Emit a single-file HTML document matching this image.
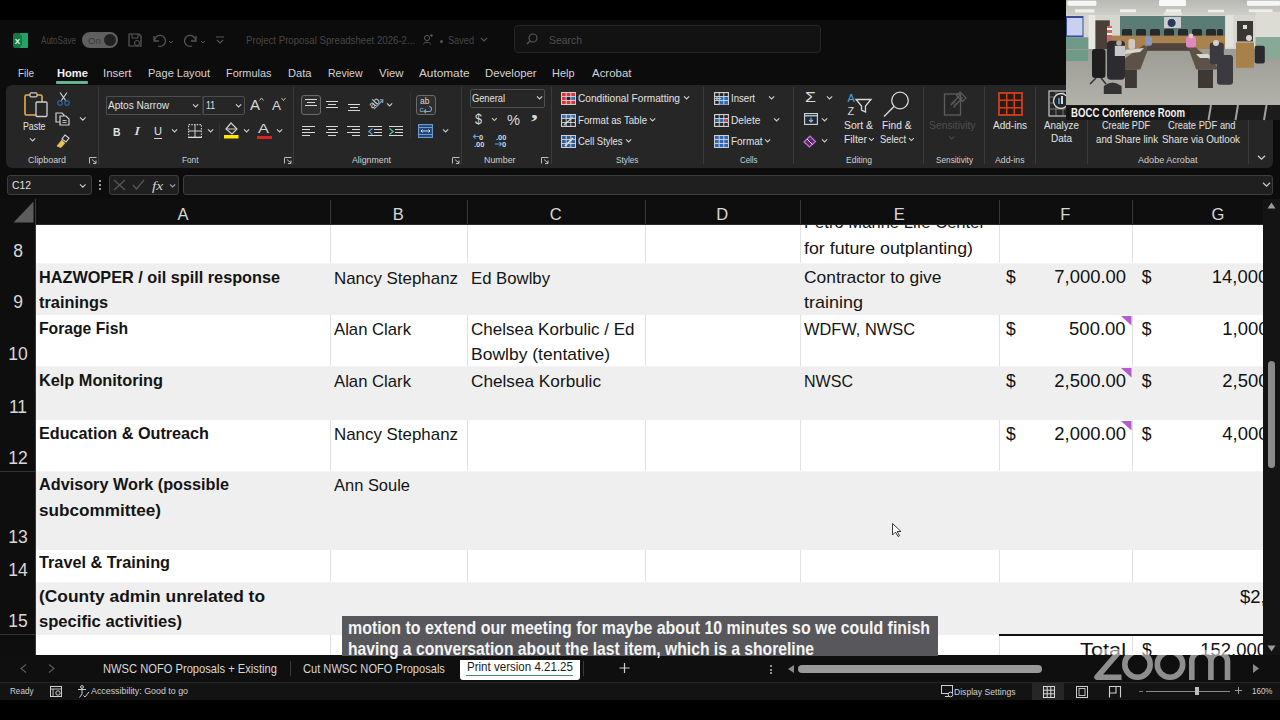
<!DOCTYPE html>
<html><head><meta charset="utf-8">
<style>
html,body{margin:0;padding:0;width:1280px;height:720px;overflow:hidden;background:#000;}
body{position:relative;font-family:"Liberation Sans", sans-serif;}
.t{position:absolute;white-space:nowrap;line-height:1;}
.r{position:absolute;}
svg.r{overflow:visible;}
</style></head><body>
<div class="r" style="left:0px;top:0px;width:1280px;height:20px;background:#000;"></div><div class="r" style="left:0px;top:20px;width:1280px;height:179px;background:#0c0c0c;"></div><div class="r" style="left:6px;top:85px;width:1267px;height:83px;background:#262626;border-radius:6px;"></div><svg class="r" style="left:13px;top:33px;" width="15" height="15" viewBox="0 0 15 15"><rect x="0" y="0" width="15" height="15" rx="2" fill="#1e7145"/><rect x="7" y="0" width="8" height="15" rx="1" fill="#21a366"/><rect x="0" y="2" width="9" height="11" rx="1" fill="#107c41"/><text x="4.5" y="11" font-size="8" font-family="Liberation Sans" font-weight="bold" fill="#e8f5ee" text-anchor="middle">X</text></svg><div class="t" style="left:41px;top:35.53px;font-size:10px;color:#474747;font-weight:normal;transform:scaleX(0.8071);transform-origin:left top;">AutoSave</div><div class="r" style="left:82px;top:32px;width:36px;height:16px;background:#5f5f5f;border-radius:8px;"></div><div class="t" style="left:88px;top:35.96px;font-size:9.5px;color:#3a3a3a;font-weight:normal;">On</div><div class="r" style="left:104px;top:34px;width:12px;height:12px;background:#202020;border-radius:6px;"></div><svg class="r" style="left:128px;top:33px;" width="14" height="14" viewBox="0 0 14 14"><path d="M1 1h10l2 2v10H1z" fill="none" stroke="#5a5a5a" stroke-width="1.2"/><path d="M4 1v4h6V1" fill="none" stroke="#5a5a5a" stroke-width="1"/><circle cx="9" cy="10" r="2.5" fill="none" stroke="#5a5a5a" stroke-width="1"/></svg><svg class="r" style="left:152px;top:33px;" width="22" height="14" viewBox="0 0 22 14"><path d="M2 3v5h5" fill="none" stroke="#555" stroke-width="1.3"/><path d="M2.5 7.5A5.5 5.5 0 1 1 6 13" fill="none" stroke="#555" stroke-width="1.3"/><path d="M17 8l2 2 2-2" fill="none" stroke="#555" stroke-width="1"/></svg><svg class="r" style="left:184px;top:33px;" width="22" height="14" viewBox="0 0 22 14"><path d="M12 3v5H7" fill="none" stroke="#555" stroke-width="1.3"/><path d="M11.5 7.5A5.5 5.5 0 1 0 8 13" fill="none" stroke="#555" stroke-width="1.3"/><path d="M17 8l2 2 2-2" fill="none" stroke="#555" stroke-width="1"/></svg><svg class="r" style="left:215px;top:35px;" width="10" height="10" viewBox="0 0 10 10"><path d="M1 2h8M2 5l3 3 3-3" fill="none" stroke="#555" stroke-width="1.1"/></svg><div class="t" style="left:246px;top:35.11px;font-size:10.5px;color:#474747;font-weight:normal;transform:scaleX(0.9192);transform-origin:left top;">Project Proposal Spreadsheet 2026-2...</div><svg class="r" style="left:423px;top:34px;" width="10" height="11" viewBox="0 0 10 11"><circle cx="4" cy="4" r="2.6" fill="none" stroke="#5a5a5a" stroke-width="1"/><path d="M0.5 10.5c0-3 7-3 7 0" fill="none" stroke="#5a5a5a" stroke-width="1"/><circle cx="8.5" cy="1.5" r="1.2" fill="#5a5a5a"/></svg><div class="r" style="left:440px;top:40px;width:3px;height:3px;background:#555;border-radius:2px;"></div><div class="t" style="left:448px;top:35.11px;font-size:10.5px;color:#474747;font-weight:normal;transform:scaleX(0.8733);transform-origin:left top;">Saved</div><svg class="r" style="left:480px;top:37px;" width="8" height="6" viewBox="0 0 8 6"><path d="M1 1l3 3 3-3" fill="none" stroke="#555" stroke-width="1.1"/></svg><div class="r" style="left:514px;top:25px;width:307px;height:28px;background:#121212;border:1px solid #262626;border-radius:4px;box-sizing:border-box;"></div><svg class="r" style="left:526px;top:33px;" width="12" height="12" viewBox="0 0 12 12"><circle cx="7" cy="5" r="4" fill="none" stroke="#555" stroke-width="1.2"/><path d="M4 8l-3 3" stroke="#555" stroke-width="1.4"/></svg><div class="t" style="left:549px;top:35.11px;font-size:10.5px;color:#505050;font-weight:normal;transform:scaleX(0.9919);transform-origin:left top;">Search</div><div class="t" style="left:18px;top:67.51px;font-size:11.8px;color:#d4d4d4;font-weight:normal;transform:scaleX(0.8415);transform-origin:left top;">File</div><div class="t" style="left:102.5px;top:67.51px;font-size:11.8px;color:#d4d4d4;font-weight:normal;transform:scaleX(0.9657);transform-origin:left top;">Insert</div><div class="t" style="left:147.5px;top:67.51px;font-size:11.8px;color:#d4d4d4;font-weight:normal;transform:scaleX(0.9356);transform-origin:left top;">Page Layout</div><div class="t" style="left:225.5px;top:67.51px;font-size:11.8px;color:#d4d4d4;font-weight:normal;transform:scaleX(0.9252);transform-origin:left top;">Formulas</div><div class="t" style="left:287.5px;top:67.51px;font-size:11.8px;color:#d4d4d4;font-weight:normal;transform:scaleX(0.9428);transform-origin:left top;">Data</div><div class="t" style="left:327.5px;top:67.51px;font-size:11.8px;color:#d4d4d4;font-weight:normal;transform:scaleX(0.8917);transform-origin:left top;">Review</div><div class="t" style="left:378.5px;top:67.51px;font-size:11.8px;color:#d4d4d4;font-weight:normal;transform:scaleX(0.9659);transform-origin:left top;">View</div><div class="t" style="left:418.5px;top:67.51px;font-size:11.8px;color:#d4d4d4;font-weight:normal;transform:scaleX(0.9998);transform-origin:left top;">Automate</div><div class="t" style="left:485px;top:67.51px;font-size:11.8px;color:#d4d4d4;font-weight:normal;transform:scaleX(0.9575);transform-origin:left top;">Developer</div><div class="t" style="left:552px;top:67.51px;font-size:11.8px;color:#d4d4d4;font-weight:normal;transform:scaleX(0.9271);transform-origin:left top;">Help</div><div class="t" style="left:591.5px;top:67.51px;font-size:11.8px;color:#d4d4d4;font-weight:normal;transform:scaleX(0.9713);transform-origin:left top;">Acrobat</div><div class="t" style="left:56.5px;top:67.51px;font-size:11.8px;color:#f2f2f2;font-weight:bold;transform:scaleX(0.9455);transform-origin:left top;">Home</div><div class="r" style="left:56px;top:81px;width:32px;height:2.5px;background:#64b391;border-radius:1px;"></div><svg class="r" style="left:24px;top:92px;" width="24" height="26" viewBox="0 0 24 26"><rect x="1" y="3" width="17" height="20" rx="1.5" fill="none" stroke="#e6ae48" stroke-width="1.6"/><rect x="6" y="0.8" width="7" height="4" rx="1" fill="#262626" stroke="#c9c9c9" stroke-width="1.2"/><rect x="12" y="10" width="11" height="14.5" rx="1" fill="#262626" stroke="#cfcfcf" stroke-width="1.3"/></svg><div class="t" style="left:22.5px;top:120.69px;font-size:11px;color:#e3e3e3;font-weight:normal;transform:scaleX(0.7999);transform-origin:left top;">Paste</div><svg class="r" style="left:29.4px;top:137.4px;" width="7.2" height="5.2" viewBox="0 0 7.2 5.2"><path d="M1 1.3 L3.6 3.9000000000000004 L6.2 1.3" fill="none" stroke="#cfcfcf" stroke-width="1.1"/></svg><svg class="r" style="left:57px;top:92px;" width="13" height="14" viewBox="0 0 13 14"><path d="M3 0.5L9 9M10 0.5L4 9" stroke="#d0d0d0" stroke-width="1.2" fill="none"/><circle cx="3" cy="11" r="2.2" fill="none" stroke="#2d5f96" stroke-width="1.4"/><circle cx="10" cy="11" r="2.2" fill="none" stroke="#2d5f96" stroke-width="1.4"/></svg><svg class="r" style="left:55px;top:112px;" width="15" height="14" viewBox="0 0 15 14"><path d="M1 1h6l2 2v7H1z" fill="none" stroke="#d0d0d0" stroke-width="1.2"/><path d="M5 4h6l3 3v6H5z" fill="#262626" stroke="#d0d0d0" stroke-width="1.2"/><path d="M7.5 8.5h4M7.5 10.5h4" stroke="#d0d0d0" stroke-width="0.9"/></svg><svg class="r" style="left:79.2px;top:116.2px;" width="7.6" height="5.6" viewBox="0 0 7.6 5.6"><path d="M1 1.4 L3.8 4.199999999999999 L6.6 1.4" fill="none" stroke="#cfcfcf" stroke-width="1.1"/></svg><svg class="r" style="left:56px;top:134px;" width="14" height="14" viewBox="0 0 14 14"><path d="M9 1l4 3-3 4-4-3z" fill="none" stroke="#d0d0d0" stroke-width="1.2"/><path d="M6 6L1 12l4 1.5 4-4.5" fill="#e6c460" stroke="#e6ae48" stroke-width="1"/></svg><div class="t" style="left:28px;top:155.68px;font-size:9px;color:#d0d0d0;font-weight:normal;transform:scaleX(0.9864);transform-origin:left top;">Clipboard</div><svg class="r" style="left:88.5px;top:156.5px;" width="8" height="7" viewBox="0 0 8 7"><path d="M0.5 6.5V0.5H7.5" fill="none" stroke="#bbb" stroke-width="1"/><path d="M3 2.5L7 6M7 3.5V6.5H4" fill="none" stroke="#bbb" stroke-width="1"/></svg><div class="r" style="left:98px;top:87px;width:1px;height:77px;background:#3b3b3b;"></div><div class="r" style="left:106px;top:95.5px;width:95px;height:19px;background:transparent;border:1px solid #4e4e4e;border-right:none;box-sizing:border-box;border-radius:2px 0 0 2px;"></div><div class="r" style="left:203px;top:95.5px;width:42px;height:19px;background:transparent;border:1px solid #4e4e4e;box-sizing:border-box;border-radius:0 2px 2px 0;"></div><div class="r" style="left:202px;top:95.5px;width:1px;height:19px;background:#3a3a3a;"></div><div class="t" style="left:108px;top:100.41px;font-size:10.5px;color:#e3e3e3;font-weight:normal;transform:scaleX(0.9590);transform-origin:left top;">Aptos Narrow</div><svg class="r" style="left:192.4px;top:103.4px;" width="7.2" height="5.2" viewBox="0 0 7.2 5.2"><path d="M1 1.3 L3.6 3.9000000000000004 L6.2 1.3" fill="none" stroke="#cfcfcf" stroke-width="1.1"/></svg><div class="t" style="left:206px;top:100.41px;font-size:10.5px;color:#e3e3e3;font-weight:normal;transform:scaleX(0.8257);transform-origin:left top;">11</div><svg class="r" style="left:235.4px;top:103.4px;" width="7.2" height="5.2" viewBox="0 0 7.2 5.2"><path d="M1 1.3 L3.6 3.9000000000000004 L6.2 1.3" fill="none" stroke="#cfcfcf" stroke-width="1.1"/></svg><div class="t" style="left:250px;top:98.15px;font-size:14px;color:#d8d8d8;font-weight:normal;transform:scaleX(1.0708);transform-origin:left top;">A</div><svg class="r" style="left:259px;top:97px;" width="5" height="4" viewBox="0 0 5 4"><path d="M0.5 3.5L2.5 1L4.5 3.5" fill="none" stroke="#ccc" stroke-width="0.9"/></svg><div class="t" style="left:272px;top:99.84px;font-size:12px;color:#d8d8d8;font-weight:normal;transform:scaleX(1.1244);transform-origin:left top;">A</div><svg class="r" style="left:281px;top:97px;" width="5" height="4" viewBox="0 0 5 4"><path d="M0.5 1L2.5 3.5L4.5 1" fill="none" stroke="#ccc" stroke-width="0.9"/></svg><div class="t" style="left:112.5px;top:126.69px;font-size:11px;color:#e3e3e3;font-weight:bold;transform:scaleX(0.9441);transform-origin:left top;">B</div><div class="t" style="left:134px;top:126.27px;font-size:11.5px;color:#e3e3e3;font-weight:normal;font-family:'Liberation Serif';transform:scaleX(1.5662);transform-origin:left top;font-style:italic;">I</div><div class="t" style="left:154px;top:126.19px;font-size:11px;color:#e3e3e3;font-weight:normal;transform:scaleX(1.0070);transform-origin:left top;">U</div><div class="r" style="left:154px;top:137.5px;width:8px;height:1px;background:#d0d0d0;"></div><svg class="r" style="left:170.9px;top:128.4px;" width="7.2" height="5.2" viewBox="0 0 7.2 5.2"><path d="M1 1.3 L3.6 3.9000000000000004 L6.2 1.3" fill="none" stroke="#cfcfcf" stroke-width="1.1"/></svg><svg class="r" style="left:188px;top:124px;" width="14" height="14" viewBox="0 0 14 14"><rect x="0.6" y="0.6" width="12.8" height="12.8" fill="none" stroke="#d0d0d0" stroke-width="1.1" stroke-dasharray="1.5 1.2"/><path d="M7 0.6V13.4M0.6 7H13.4" stroke="#d0d0d0" stroke-width="1"/><path d="M0.6 13.4H13.4" stroke="#e0e0e0" stroke-width="1.2"/></svg><svg class="r" style="left:206.9px;top:128.4px;" width="7.2" height="5.2" viewBox="0 0 7.2 5.2"><path d="M1 1.3 L3.6 3.9000000000000004 L6.2 1.3" fill="none" stroke="#cfcfcf" stroke-width="1.1"/></svg><div class="r" style="left:219px;top:123px;width:1px;height:18px;background:#333;"></div><svg class="r" style="left:224px;top:122px;" width="15" height="17" viewBox="0 0 15 17"><path d="M7 1L13 7L8 12L2 7z" fill="none" stroke="#d0d0d0" stroke-width="1.2"/><path d="M2 7h11" stroke="#d0d0d0" stroke-width="1"/><rect x="0" y="13" width="14.5" height="3.5" fill="#ffe800"/></svg><svg class="r" style="left:242.9px;top:128.4px;" width="7.2" height="5.2" viewBox="0 0 7.2 5.2"><path d="M1 1.3 L3.6 3.9000000000000004 L6.2 1.3" fill="none" stroke="#cfcfcf" stroke-width="1.1"/></svg><div class="t" style="left:258px;top:123.42px;font-size:12.5px;color:#d8d8d8;font-weight:normal;transform:scaleX(1.3193);transform-origin:left top;">A</div><div class="r" style="left:256.5px;top:135.5px;width:15.5px;height:3px;background:#e01f1f;"></div><svg class="r" style="left:276.4px;top:128.4px;" width="7.2" height="5.2" viewBox="0 0 7.2 5.2"><path d="M1 1.3 L3.6 3.9000000000000004 L6.2 1.3" fill="none" stroke="#cfcfcf" stroke-width="1.1"/></svg><div class="t" style="left:181.5px;top:156.18px;font-size:9px;color:#d0d0d0;font-weight:normal;transform:scaleX(0.9162);transform-origin:left top;">Font</div><svg class="r" style="left:284px;top:156.5px;" width="8" height="7" viewBox="0 0 8 7"><path d="M0.5 6.5V0.5H7.5" fill="none" stroke="#bbb" stroke-width="1"/><path d="M3 2.5L7 6M7 3.5V6.5H4" fill="none" stroke="#bbb" stroke-width="1"/></svg><div class="r" style="left:293px;top:87px;width:1px;height:77px;background:#3b3b3b;"></div><div class="r" style="left:301px;top:94.5px;width:20px;height:20.5px;background:#2e2e2e;border:1px solid #6a6a6a;border-radius:3px;box-sizing:border-box;"></div><div class="r" style="left:305px;top:98.5px;width:12px;height:1.3px;background:#d8d8d8;"></div><div class="r" style="left:307px;top:101.5px;width:8px;height:1.3px;background:#d8d8d8;"></div><div class="r" style="left:305px;top:104.5px;width:12px;height:1.3px;background:#d8d8d8;"></div><div class="r" style="left:326px;top:100.5px;width:12px;height:1.3px;background:#d8d8d8;"></div><div class="r" style="left:328px;top:103.5px;width:8px;height:1.3px;background:#d8d8d8;"></div><div class="r" style="left:326px;top:106.5px;width:12px;height:1.3px;background:#d8d8d8;"></div><div class="r" style="left:347.5px;top:104px;width:12px;height:1.3px;background:#d8d8d8;"></div><div class="r" style="left:349.5px;top:107px;width:8px;height:1.3px;background:#d8d8d8;"></div><div class="r" style="left:347.5px;top:110px;width:12px;height:1.3px;background:#d8d8d8;"></div><svg class="r" style="left:368px;top:94px;" width="16" height="17" viewBox="0 0 16 17"><text x="0" y="12" font-size="10" font-family="Liberation Sans" fill="#d8d8d8" transform="rotate(-45 6 8)">ab</text><path d="M6 15L15 6M12 5.5L15 6L14.5 9" fill="none" stroke="#7aa6d0" stroke-width="1.1"/></svg><svg class="r" style="left:385.9px;top:101.9px;" width="7.2" height="5.2" viewBox="0 0 7.2 5.2"><path d="M1 1.3 L3.6 3.9000000000000004 L6.2 1.3" fill="none" stroke="#cfcfcf" stroke-width="1.1"/></svg><div class="r" style="left:302px;top:126px;width:13px;height:1.3px;background:#d8d8d8;"></div><div class="r" style="left:302px;top:129px;width:8px;height:1.3px;background:#d8d8d8;"></div><div class="r" style="left:302px;top:132px;width:13px;height:1.3px;background:#d8d8d8;"></div><div class="r" style="left:302px;top:135px;width:8px;height:1.3px;background:#d8d8d8;"></div><div class="r" style="left:326px;top:126px;width:12px;height:1.3px;background:#d8d8d8;"></div><div class="r" style="left:328px;top:129px;width:8px;height:1.3px;background:#d8d8d8;"></div><div class="r" style="left:326px;top:132px;width:12px;height:1.3px;background:#d8d8d8;"></div><div class="r" style="left:328px;top:135px;width:8px;height:1.3px;background:#d8d8d8;"></div><div class="r" style="left:347px;top:126px;width:13px;height:1.3px;background:#d8d8d8;"></div><div class="r" style="left:352px;top:129px;width:8px;height:1.3px;background:#d8d8d8;"></div><div class="r" style="left:347px;top:132px;width:13px;height:1.3px;background:#d8d8d8;"></div><div class="r" style="left:352px;top:135px;width:8px;height:1.3px;background:#d8d8d8;"></div><div class="r" style="left:368px;top:126px;width:14px;height:1.3px;background:#d8d8d8;"></div><div class="r" style="left:374px;top:129px;width:8px;height:1.3px;background:#d8d8d8;"></div><div class="r" style="left:374px;top:132px;width:8px;height:1.3px;background:#d8d8d8;"></div><div class="r" style="left:368px;top:135px;width:14px;height:1.3px;background:#d8d8d8;"></div><svg class="r" style="left:368px;top:128px;" width="5" height="7" viewBox="0 0 5 7"><path d="M4.5 0.5L0.8 3.5L4.5 6.5" fill="none" stroke="#5aa0e0" stroke-width="1.2"/></svg><div class="r" style="left:389px;top:126px;width:14px;height:1.3px;background:#d8d8d8;"></div><div class="r" style="left:395px;top:129px;width:8px;height:1.3px;background:#d8d8d8;"></div><div class="r" style="left:395px;top:132px;width:8px;height:1.3px;background:#d8d8d8;"></div><div class="r" style="left:389px;top:135px;width:14px;height:1.3px;background:#d8d8d8;"></div><svg class="r" style="left:389px;top:128px;" width="5" height="7" viewBox="0 0 5 7"><path d="M0.5 0.5L4.2 3.5L0.5 6.5" fill="none" stroke="#5ac0a0" stroke-width="1.2"/></svg><div class="r" style="left:410px;top:93px;width:1px;height:45px;background:#333;"></div><div class="r" style="left:416px;top:94.5px;width:20px;height:20.5px;background:#2e2e2e;border:1px solid #6a6a6a;border-radius:3px;box-sizing:border-box;"></div><svg class="r" style="left:419px;top:96px;" width="15" height="17" viewBox="0 0 15 17"><text x="1" y="8" font-size="8.5" font-family="Liberation Sans" fill="#d8d8d8">ab</text><path d="M10 10.5A2.5 2.5 0 0 1 10 15.5H5M7 13.5L5 15.5L7 17" fill="none" stroke="#7aa6d0" stroke-width="1.1"/><text x="0.5" y="16" font-size="8" font-family="Liberation Sans" fill="#8fb5d8">c</text></svg><svg class="r" style="left:418px;top:124px;" width="15" height="14" viewBox="0 0 15 14"><rect x="0.6" y="0.6" width="13.8" height="12.8" fill="#1f4670" stroke="#6f9ed4" stroke-width="1.1"/><path d="M0.6 3.5H14.4M0.6 10.5H14.4" stroke="#6f9ed4" stroke-width="1"/><path d="M3 7h9M4.5 5.5L3 7l1.5 1.5M10.5 5.5L12 7l-1.5 1.5" fill="none" stroke="#dfeaf8" stroke-width="0.9"/></svg><svg class="r" style="left:441.9px;top:128.4px;" width="7.2" height="5.2" viewBox="0 0 7.2 5.2"><path d="M1 1.3 L3.6 3.9000000000000004 L6.2 1.3" fill="none" stroke="#cfcfcf" stroke-width="1.1"/></svg><div class="t" style="left:352px;top:156.18px;font-size:9px;color:#d0d0d0;font-weight:normal;transform:scaleX(0.9745);transform-origin:left top;">Alignment</div><svg class="r" style="left:452px;top:156.5px;" width="8" height="7" viewBox="0 0 8 7"><path d="M0.5 6.5V0.5H7.5" fill="none" stroke="#bbb" stroke-width="1"/><path d="M3 2.5L7 6M7 3.5V6.5H4" fill="none" stroke="#bbb" stroke-width="1"/></svg><div class="r" style="left:461px;top:87px;width:1px;height:77px;background:#3b3b3b;"></div><div class="r" style="left:470px;top:88.5px;width:75px;height:19.5px;background:transparent;border:1px solid #4e4e4e;box-sizing:border-box;border-radius:2px;"></div><div class="t" style="left:472px;top:92.81px;font-size:10.5px;color:#e3e3e3;font-weight:normal;transform:scaleX(0.8834);transform-origin:left top;">General</div><svg class="r" style="left:535.9px;top:95.4px;" width="7.2" height="5.2" viewBox="0 0 7.2 5.2"><path d="M1 1.3 L3.6 3.9000000000000004 L6.2 1.3" fill="none" stroke="#cfcfcf" stroke-width="1.1"/></svg><div class="t" style="left:475px;top:112.45px;font-size:14px;color:#d8d8d8;font-weight:normal;transform:scaleX(0.8989);transform-origin:left top;">$</div><svg class="r" style="left:491.1px;top:116.6px;" width="6.8" height="4.8" viewBox="0 0 6.8 4.8"><path d="M1 1.2 L3.4 3.5999999999999996 L5.8 1.2" fill="none" stroke="#cfcfcf" stroke-width="1.1"/></svg><div class="t" style="left:507px;top:113.15px;font-size:14px;color:#d8d8d8;font-weight:normal;transform:scaleX(1.0443);transform-origin:left top;">%</div><div class="t" style="left:531px;top:100.38px;font-size:22px;color:#d8d8d8;font-weight:bold;font-family:'Liberation Serif';transform:scaleX(1.2727);transform-origin:left top;">,</div><svg class="r" style="left:473px;top:133px;" width="14" height="15" viewBox="0 0 14 15"><text x="6" y="6.5" font-size="7.5" font-family="Liberation Sans" font-weight="bold" fill="#d8d8d8">0</text><text x="1" y="14" font-size="7.5" font-family="Liberation Sans" font-weight="bold" fill="#d8d8d8">.00</text><path d="M6 3.5H0.5M2.5 1.5L0.5 3.5L2.5 5.5" fill="none" stroke="#5aa0e0" stroke-width="1.1"/></svg><svg class="r" style="left:494px;top:133px;" width="14" height="15" viewBox="0 0 14 15"><text x="2" y="6.5" font-size="7.5" font-family="Liberation Sans" font-weight="bold" fill="#d8d8d8">.00</text><text x="8" y="14" font-size="7.5" font-family="Liberation Sans" font-weight="bold" fill="#d8d8d8">0</text><path d="M1 11H7.5M5.5 9L7.5 11L5.5 13" fill="none" stroke="#5aa0e0" stroke-width="1.1"/></svg><div class="t" style="left:484px;top:156.18px;font-size:9px;color:#d0d0d0;font-weight:normal;transform:scaleX(0.9841);transform-origin:left top;">Number</div><svg class="r" style="left:541px;top:156.5px;" width="8" height="7" viewBox="0 0 8 7"><path d="M0.5 6.5V0.5H7.5" fill="none" stroke="#bbb" stroke-width="1"/><path d="M3 2.5L7 6M7 3.5V6.5H4" fill="none" stroke="#bbb" stroke-width="1"/></svg><div class="r" style="left:551px;top:87px;width:1px;height:77px;background:#3b3b3b;"></div><svg class="r" style="left:561px;top:91.5px;" width="15" height="13" viewBox="0 0 15 13"><rect x="0.6" y="0.6" width="13.8" height="11.8" fill="#262626" stroke="#d8d8d8" stroke-width="1.1"/><rect x="1" y="1" width="13" height="3.5" fill="#e0303a"/><rect x="1" y="4.5" width="4" height="4" fill="#e0303a"/><rect x="9.8" y="4.5" width="4" height="4" fill="#3a70c0"/><rect x="1" y="8.5" width="13" height="3.5" fill="#e0303a"/><path d="M0.6 4.5H14.4M0.6 8.5H14.4M5.2 0.6V12.4M9.8 0.6V12.4" stroke="#d8d8d8" stroke-width="0.9"/></svg><div class="t" style="left:578px;top:92.81px;font-size:10.5px;color:#e3e3e3;font-weight:normal;transform:scaleX(0.9656);transform-origin:left top;">Conditional Formatting</div><svg class="r" style="left:683.4px;top:95.4px;" width="7.2" height="5.2" viewBox="0 0 7.2 5.2"><path d="M1 1.3 L3.6 3.9000000000000004 L6.2 1.3" fill="none" stroke="#cfcfcf" stroke-width="1.1"/></svg><svg class="r" style="left:561px;top:113.5px;" width="15" height="13" viewBox="0 0 15 13"><rect x="0.6" y="0.6" width="13.8" height="11.8" fill="#262626" stroke="#d8d8d8" stroke-width="1.1"/><rect x="1" y="1" width="13" height="3.5" fill="#3b6fb0"/><path d="M3 11L12 3" stroke="#9ad0f0" stroke-width="1.6"/><path d="M0.6 4.5H14.4M0.6 8.5H14.4M5.2 0.6V12.4M9.8 0.6V12.4" stroke="#d8d8d8" stroke-width="0.9"/></svg><div class="t" style="left:578px;top:114.61px;font-size:10.5px;color:#e3e3e3;font-weight:normal;transform:scaleX(0.9189);transform-origin:left top;">Format as Table</div><svg class="r" style="left:649.4px;top:117.4px;" width="7.2" height="5.2" viewBox="0 0 7.2 5.2"><path d="M1 1.3 L3.6 3.9000000000000004 L6.2 1.3" fill="none" stroke="#cfcfcf" stroke-width="1.1"/></svg><svg class="r" style="left:561px;top:135px;" width="15" height="13" viewBox="0 0 15 13"><rect x="0.6" y="0.6" width="13.8" height="11.8" fill="#262626" stroke="#d8d8d8" stroke-width="1.1"/><rect x="1" y="1" width="13" height="11" fill="#2f5f9e"/><path d="M4 11L12 3" stroke="#d8ecff" stroke-width="1.6"/><path d="M0.6 4.5H14.4M0.6 8.5H14.4M5.2 0.6V12.4M9.8 0.6V12.4" stroke="#d8d8d8" stroke-width="0.9"/></svg><div class="t" style="left:578px;top:135.71px;font-size:10.5px;color:#e3e3e3;font-weight:normal;transform:scaleX(0.8972);transform-origin:left top;">Cell Styles</div><svg class="r" style="left:624.9px;top:138.4px;" width="7.2" height="5.2" viewBox="0 0 7.2 5.2"><path d="M1 1.3 L3.6 3.9000000000000004 L6.2 1.3" fill="none" stroke="#cfcfcf" stroke-width="1.1"/></svg><div class="t" style="left:616px;top:156.18px;font-size:9px;color:#d0d0d0;font-weight:normal;transform:scaleX(0.9180);transform-origin:left top;">Styles</div><div class="r" style="left:703px;top:87px;width:1px;height:77px;background:#3b3b3b;"></div><svg class="r" style="left:714px;top:92px;" width="15" height="13" viewBox="0 0 15 13"><rect x="0.6" y="0.6" width="13.8" height="11.8" fill="#262626" stroke="#d8d8d8" stroke-width="1.1"/><rect x="5.2" y="4.5" width="8.8" height="8" fill="#2f68b8"/><path d="M1.5 6.5H7M4.5 4.5L1.5 6.5L4.5 8.5" stroke="#8fd0f0" stroke-width="1" fill="none"/><path d="M0.6 4.5H14.4M0.6 8.5H14.4M5.2 0.6V12.4M9.8 0.6V12.4" stroke="#d8d8d8" stroke-width="0.9"/></svg><div class="t" style="left:730.5px;top:92.81px;font-size:10.5px;color:#e3e3e3;font-weight:normal;transform:scaleX(0.9139);transform-origin:left top;">Insert</div><svg class="r" style="left:767.9px;top:95.4px;" width="7.2" height="5.2" viewBox="0 0 7.2 5.2"><path d="M1 1.3 L3.6 3.9000000000000004 L6.2 1.3" fill="none" stroke="#cfcfcf" stroke-width="1.1"/></svg><svg class="r" style="left:714px;top:113.5px;" width="15" height="13" viewBox="0 0 15 13"><rect x="0.6" y="0.6" width="13.8" height="11.8" fill="#262626" stroke="#d8d8d8" stroke-width="1.1"/><rect x="1" y="4.5" width="8.8" height="4" fill="#2f68b8"/><path d="M10 4L14 9M14 4L10 9" stroke="#e04a6a" stroke-width="1.3"/><path d="M0.6 4.5H14.4M0.6 8.5H14.4M5.2 0.6V12.4M9.8 0.6V12.4" stroke="#d8d8d8" stroke-width="0.9"/></svg><div class="t" style="left:730.5px;top:114.61px;font-size:10.5px;color:#e3e3e3;font-weight:normal;transform:scaleX(0.9719);transform-origin:left top;">Delete</div><svg class="r" style="left:773.4px;top:117.4px;" width="7.2" height="5.2" viewBox="0 0 7.2 5.2"><path d="M1 1.3 L3.6 3.9000000000000004 L6.2 1.3" fill="none" stroke="#cfcfcf" stroke-width="1.1"/></svg><svg class="r" style="left:714px;top:135px;" width="15" height="13" viewBox="0 0 15 13"><rect x="0.6" y="0.6" width="13.8" height="11.8" fill="#262626" stroke="#d8d8d8" stroke-width="1.1"/><rect x="1" y="1" width="13" height="11" fill="#2f68b8"/><path d="M0.6 4.5H14.4M0.6 8.5H14.4M5.2 0.6V12.4M9.8 0.6V12.4" stroke="#d8d8d8" stroke-width="0.9"/></svg><div class="t" style="left:730.5px;top:135.71px;font-size:10.5px;color:#e3e3e3;font-weight:normal;transform:scaleX(0.9473);transform-origin:left top;">Format</div><svg class="r" style="left:764.4px;top:138.4px;" width="7.2" height="5.2" viewBox="0 0 7.2 5.2"><path d="M1 1.3 L3.6 3.9000000000000004 L6.2 1.3" fill="none" stroke="#cfcfcf" stroke-width="1.1"/></svg><div class="t" style="left:739.5px;top:156.18px;font-size:9px;color:#d0d0d0;font-weight:normal;transform:scaleX(0.8748);transform-origin:left top;">Cells</div><div class="r" style="left:793px;top:87px;width:1px;height:77px;background:#3b3b3b;"></div><div class="t" style="left:805px;top:90.45px;font-size:14px;color:#d8d8d8;font-weight:normal;transform:scaleX(1.2708);transform-origin:left top;">Σ</div><svg class="r" style="left:826.4px;top:95.4px;" width="7.2" height="5.2" viewBox="0 0 7.2 5.2"><path d="M1 1.3 L3.6 3.9000000000000004 L6.2 1.3" fill="none" stroke="#cfcfcf" stroke-width="1.1"/></svg><svg class="r" style="left:804px;top:113px;" width="14" height="12" viewBox="0 0 14 12"><rect x="0.6" y="0.6" width="12.8" height="10.8" fill="#1d2a3a" stroke="#d8d8d8" stroke-width="1.1"/><path d="M0.6 2.8H13.4" stroke="#d8d8d8" stroke-width="1.2"/><path d="M7 4.5V9M5 7L7 9L9 7" fill="none" stroke="#9ab8d8" stroke-width="1.1"/></svg><svg class="r" style="left:821.4px;top:117.4px;" width="7.2" height="5.2" viewBox="0 0 7.2 5.2"><path d="M1 1.3 L3.6 3.9000000000000004 L6.2 1.3" fill="none" stroke="#cfcfcf" stroke-width="1.1"/></svg><svg class="r" style="left:803px;top:134px;" width="14" height="13" viewBox="0 0 14 13"><path d="M1 8L7 2L12.5 7.5L6.5 13z" fill="#5a2a6a" stroke="#d070e0" stroke-width="1.2"/><path d="M4 5L9.5 10.5" stroke="#e0e0e0" stroke-width="1"/></svg><svg class="r" style="left:821.4px;top:138.4px;" width="7.2" height="5.2" viewBox="0 0 7.2 5.2"><path d="M1 1.3 L3.6 3.9000000000000004 L6.2 1.3" fill="none" stroke="#cfcfcf" stroke-width="1.1"/></svg><svg class="r" style="left:847px;top:92px;" width="26" height="24" viewBox="0 0 26 24"><text x="0.5" y="10" font-size="11" font-family="Liberation Sans" fill="#4ea3e0">A</text><text x="0.5" y="22.5" font-size="11" font-family="Liberation Sans" fill="#d8d8d8">Z</text><path d="M9 7.5H24L18.5 14V20L14.5 18V14z" fill="none" stroke="#d8d8d8" stroke-width="1.3"/></svg><div class="t" style="left:844px;top:120.11px;font-size:10.5px;color:#e3e3e3;font-weight:normal;transform:scaleX(0.9939);transform-origin:left top;">Sort &amp;</div><div class="t" style="left:843.5px;top:133.61px;font-size:10.5px;color:#e3e3e3;font-weight:normal;transform:scaleX(0.9857);transform-origin:left top;">Filter</div><svg class="r" style="left:867.6px;top:136.6px;" width="6.8" height="4.8" viewBox="0 0 6.8 4.8"><path d="M1 1.2 L3.4 3.5999999999999996 L5.8 1.2" fill="none" stroke="#cfcfcf" stroke-width="1.1"/></svg><svg class="r" style="left:883px;top:91px;" width="27" height="27" viewBox="0 0 27 27"><circle cx="17" cy="9.5" r="8.3" fill="none" stroke="#d8d8d8" stroke-width="1.3"/><path d="M11 15.5L1 25.5" stroke="#d8d8d8" stroke-width="1.4"/></svg><div class="t" style="left:882px;top:120.11px;font-size:10.5px;color:#e3e3e3;font-weight:normal;transform:scaleX(0.9721);transform-origin:left top;">Find &amp;</div><div class="t" style="left:880px;top:133.61px;font-size:10.5px;color:#e3e3e3;font-weight:normal;transform:scaleX(0.8909);transform-origin:left top;">Select</div><svg class="r" style="left:907.6px;top:136.6px;" width="6.8" height="4.8" viewBox="0 0 6.8 4.8"><path d="M1 1.2 L3.4 3.5999999999999996 L5.8 1.2" fill="none" stroke="#cfcfcf" stroke-width="1.1"/></svg><div class="t" style="left:845.5px;top:156.18px;font-size:9px;color:#d0d0d0;font-weight:normal;transform:scaleX(0.9448);transform-origin:left top;">Editing</div><div class="r" style="left:923px;top:87px;width:1px;height:77px;background:#3b3b3b;"></div><svg class="r" style="left:943px;top:90px;" width="25" height="27" viewBox="0 0 25 27"><rect x="1.5" y="4" width="16" height="21" fill="none" stroke="#5c5c5c" stroke-width="1.3"/><path d="M8 15L17 5M10.5 17.5L19.5 7.5" stroke="#5c5c5c" stroke-width="1.3"/><path d="M17 2L23 8L19.5 11.5L13.5 5.5z" fill="none" stroke="#5c5c5c" stroke-width="1.2"/><path d="M8.5 12L12 15.5M10 10.5L13.5 14" stroke="#5c5c5c" stroke-width="0.9"/></svg><div class="t" style="left:929px;top:119.51px;font-size:10.5px;color:#4e4e4e;font-weight:normal;transform:scaleX(0.9838);transform-origin:left top;">Sensitivity</div><svg class="r" style="left:948.4px;top:135.4px;" width="7.2" height="5.2" viewBox="0 0 7.2 5.2"><path d="M1 1.3 L3.6 3.9000000000000004 L6.2 1.3" fill="none" stroke="#4a4a4a" stroke-width="1.1"/></svg><div class="t" style="left:935.5px;top:156.18px;font-size:9px;color:#d0d0d0;font-weight:normal;transform:scaleX(0.9133);transform-origin:left top;">Sensitivity</div><div class="r" style="left:984px;top:87px;width:1px;height:77px;background:#3b3b3b;"></div><svg class="r" style="left:998px;top:92px;" width="25" height="24" viewBox="0 0 25 24"><rect x="1" y="1" width="23" height="22" fill="#2a1a16" stroke="#d0401c" stroke-width="1.8"/><path d="M8.7 1V23M16.3 1V23M1 8.3H24M1 15.7H24" stroke="#d0401c" stroke-width="1.5"/></svg><div class="t" style="left:993px;top:119.51px;font-size:10.5px;color:#e3e3e3;font-weight:normal;transform:scaleX(0.9550);transform-origin:left top;">Add-ins</div><div class="t" style="left:994.5px;top:156.18px;font-size:9px;color:#d0d0d0;font-weight:normal;transform:scaleX(0.9667);transform-origin:left top;">Add-ins</div><div class="r" style="left:1035px;top:87px;width:1px;height:77px;background:#3b3b3b;"></div><svg class="r" style="left:1048px;top:90px;" width="25" height="27" viewBox="0 0 25 27"><rect x="1" y="1" width="22" height="25" fill="none" stroke="#c8c8c8" stroke-width="1.2"/><path d="M1 7H23M1 13H23M1 19H23M8 1V26M15 1V26" stroke="#8a8a8a" stroke-width="0.8"/><circle cx="13" cy="11" r="7.5" fill="#262626" stroke="#d8d8d8" stroke-width="1.3"/><rect x="10" y="8" width="2" height="6" fill="#4a8ad0"/><rect x="13" y="6" width="2" height="8" fill="#d8d8d8"/></svg><div class="t" style="left:1044px;top:119.51px;font-size:10.5px;color:#e3e3e3;font-weight:normal;transform:scaleX(0.9369);transform-origin:left top;">Analyze</div><div class="t" style="left:1051px;top:132.91px;font-size:10.5px;color:#e3e3e3;font-weight:normal;transform:scaleX(0.9468);transform-origin:left top;">Data</div><div class="r" style="left:1087px;top:87px;width:1px;height:77px;background:#3b3b3b;"></div><div class="t" style="left:1102px;top:120.31px;font-size:10.5px;color:#e3e3e3;font-weight:normal;transform:scaleX(0.8659);transform-origin:left top;">Create PDF</div><div class="t" style="left:1096px;top:133.61px;font-size:10.5px;color:#e3e3e3;font-weight:normal;transform:scaleX(0.9236);transform-origin:left top;">and Share link</div><div class="t" style="left:1167.5px;top:120.31px;font-size:10.5px;color:#e3e3e3;font-weight:normal;transform:scaleX(0.8897);transform-origin:left top;">Create PDF and</div><div class="t" style="left:1162px;top:133.61px;font-size:10.5px;color:#e3e3e3;font-weight:normal;transform:scaleX(0.9346);transform-origin:left top;">Share via Outlook</div><div class="t" style="left:1138px;top:155.88px;font-size:9px;color:#d0d0d0;font-weight:normal;transform:scaleX(1.0077);transform-origin:left top;">Adobe Acrobat</div><div class="r" style="left:1248px;top:87px;width:1px;height:77px;background:#3b3b3b;"></div><svg class="r" style="left:1257.0px;top:153.5px;" width="9.0" height="7.0" viewBox="0 0 9.0 7.0"><path d="M1 1.75 L4.5 5.25 L8.0 1.75" fill="none" stroke="#d0d0d0" stroke-width="1.2"/></svg><div class="r" style="left:7px;top:174.5px;width:84.5px;height:20.5px;background:#1f1f1f;border:1px solid #3c3c3c;box-sizing:border-box;border-radius:3px;"></div><div class="t" style="left:11.5px;top:179.71px;font-size:10.5px;color:#e0e0e0;font-weight:normal;transform:scaleX(0.9864);transform-origin:left top;">C12</div><svg class="r" style="left:78.7px;top:183.2px;" width="7.6" height="5.6" viewBox="0 0 7.6 5.6"><path d="M1 1.4 L3.8 4.199999999999999 L6.6 1.4" fill="none" stroke="#c8c8c8" stroke-width="1.1"/></svg><div class="r" style="left:99px;top:180.2px;width:2px;height:2px;background:#c8c8c8;border-radius:1px;"></div><div class="r" style="left:99px;top:184.2px;width:2px;height:2px;background:#c8c8c8;border-radius:1px;"></div><div class="r" style="left:99px;top:188.2px;width:2px;height:2px;background:#c8c8c8;border-radius:1px;"></div><div class="r" style="left:109px;top:174.5px;width:70px;height:20.5px;background:#1f1f1f;border:1px solid #3c3c3c;box-sizing:border-box;border-radius:3px;"></div><svg class="r" style="left:113px;top:178.5px;" width="13" height="12" viewBox="0 0 13 12"><path d="M1 1L12 11M12 1L1 11" stroke="#585858" stroke-width="1.2"/></svg><svg class="r" style="left:132px;top:179px;" width="13" height="11" viewBox="0 0 13 11"><path d="M1 6L4.5 10L12 1" fill="none" stroke="#585858" stroke-width="1.2"/></svg><div class="t" style="left:152px;top:178.50px;font-size:13px;color:#d0d0d0;font-weight:normal;font-family:'Liberation Serif';transform:scaleX(1.2003);transform-origin:left top;font-style:italic;">fx</div><svg class="r" style="left:168.9px;top:183.4px;" width="7.2" height="5.2" viewBox="0 0 7.2 5.2"><path d="M1 1.3 L3.6 3.9000000000000004 L6.2 1.3" fill="none" stroke="#aaa" stroke-width="1.1"/></svg><div class="r" style="left:183px;top:174.5px;width:1090px;height:20.5px;background:#1f1f1f;border:1px solid #3c3c3c;box-sizing:border-box;border-radius:3px;"></div><svg class="r" style="left:1261.5px;top:180.5px;" width="9.0" height="7.0" viewBox="0 0 9.0 7.0"><path d="M1 1.75 L4.5 5.25 L8.0 1.75" fill="none" stroke="#c8c8c8" stroke-width="1.2"/></svg><div class="r" style="left:0px;top:199px;width:1263px;height:26px;background:#0e0e0e;"></div><svg class="r" style="left:13px;top:201px;" width="21" height="22" viewBox="0 0 21 22"><path d="M20.5 0.5V21.5H0.5z" fill="#5c5c5c"/></svg><div class="r" style="left:35px;top:199px;width:1px;height:456px;background:#3a3a3a;"></div><div class="t" style="left:182.9px;top:205.63px;font-size:16.5px;color:#d8d8d8;font-weight:normal;transform:translateX(-50%);">A</div><div class="r" style="left:329.8px;top:200px;width:1px;height:25px;background:#3a3a3a;"></div><div class="t" style="left:398.3px;top:205.63px;font-size:16.5px;color:#d8d8d8;font-weight:normal;transform:translateX(-50%);">B</div><div class="r" style="left:466.8px;top:200px;width:1px;height:25px;background:#3a3a3a;"></div><div class="t" style="left:555.8px;top:205.63px;font-size:16.5px;color:#d8d8d8;font-weight:normal;transform:translateX(-50%);">C</div><div class="r" style="left:644.8px;top:200px;width:1px;height:25px;background:#3a3a3a;"></div><div class="t" style="left:722.3px;top:205.63px;font-size:16.5px;color:#d8d8d8;font-weight:normal;transform:translateX(-50%);">D</div><div class="r" style="left:799.8px;top:200px;width:1px;height:25px;background:#3a3a3a;"></div><div class="t" style="left:899.15px;top:205.63px;font-size:16.5px;color:#d8d8d8;font-weight:normal;transform:translateX(-50%);">E</div><div class="r" style="left:998.5px;top:200px;width:1px;height:25px;background:#3a3a3a;"></div><div class="t" style="left:1065.25px;top:205.63px;font-size:16.5px;color:#d8d8d8;font-weight:normal;transform:translateX(-50%);">F</div><div class="r" style="left:1132px;top:200px;width:1px;height:25px;background:#3a3a3a;"></div><div class="t" style="left:1218px;top:205.63px;font-size:16.5px;color:#d8d8d8;font-weight:normal;transform:translateX(-50%);">G</div><div class="r" style="left:36px;top:224px;width:1227px;height:1px;background:#2a2a2a;"></div><div class="r" style="left:36px;top:225px;width:1227px;height:430px;overflow:hidden;background:#fff;"><div class="r" style="left:293.8px;top:0px;width:1px;height:39px;background:#e2e2e2;"></div><div class="r" style="left:430.8px;top:0px;width:1px;height:39px;background:#e2e2e2;"></div><div class="r" style="left:608.8px;top:0px;width:1px;height:39px;background:#e2e2e2;"></div><div class="r" style="left:763.8px;top:0px;width:1px;height:39px;background:#e2e2e2;"></div><div class="r" style="left:962.5px;top:0px;width:1px;height:39px;background:#e2e2e2;"></div><div class="r" style="left:1096px;top:0px;width:1px;height:39px;background:#e2e2e2;"></div><div class="r" style="left:0px;top:38px;width:1227px;height:1px;background:#f4f4f4;"></div><div class="r" style="left:0px;top:39px;width:1227px;height:51px;background:#efefef;"></div><div class="r" style="left:293.8px;top:90px;width:1px;height:52px;background:#e2e2e2;"></div><div class="r" style="left:430.8px;top:90px;width:1px;height:52px;background:#e2e2e2;"></div><div class="r" style="left:608.8px;top:90px;width:1px;height:52px;background:#e2e2e2;"></div><div class="r" style="left:763.8px;top:90px;width:1px;height:52px;background:#e2e2e2;"></div><div class="r" style="left:962.5px;top:90px;width:1px;height:52px;background:#e2e2e2;"></div><div class="r" style="left:1096px;top:90px;width:1px;height:52px;background:#e2e2e2;"></div><div class="r" style="left:0px;top:141px;width:1227px;height:1px;background:#f4f4f4;"></div><div class="r" style="left:0px;top:142px;width:1227px;height:53px;background:#efefef;"></div><div class="r" style="left:293.8px;top:195px;width:1px;height:51.5px;background:#e2e2e2;"></div><div class="r" style="left:430.8px;top:195px;width:1px;height:51.5px;background:#e2e2e2;"></div><div class="r" style="left:608.8px;top:195px;width:1px;height:51.5px;background:#e2e2e2;"></div><div class="r" style="left:763.8px;top:195px;width:1px;height:51.5px;background:#e2e2e2;"></div><div class="r" style="left:962.5px;top:195px;width:1px;height:51.5px;background:#e2e2e2;"></div><div class="r" style="left:1096px;top:195px;width:1px;height:51.5px;background:#e2e2e2;"></div><div class="r" style="left:0px;top:245.5px;width:1227px;height:1px;background:#f4f4f4;"></div><div class="r" style="left:0px;top:246.5px;width:1227px;height:78.5px;background:#efefef;"></div><div class="r" style="left:293.8px;top:325px;width:1px;height:33px;background:#e2e2e2;"></div><div class="r" style="left:430.8px;top:325px;width:1px;height:33px;background:#e2e2e2;"></div><div class="r" style="left:608.8px;top:325px;width:1px;height:33px;background:#e2e2e2;"></div><div class="r" style="left:763.8px;top:325px;width:1px;height:33px;background:#e2e2e2;"></div><div class="r" style="left:962.5px;top:325px;width:1px;height:33px;background:#e2e2e2;"></div><div class="r" style="left:1096px;top:325px;width:1px;height:33px;background:#e2e2e2;"></div><div class="r" style="left:0px;top:357px;width:1227px;height:1px;background:#f4f4f4;"></div><div class="r" style="left:0px;top:358px;width:1227px;height:51.5px;background:#efefef;"></div><div class="r" style="left:293.8px;top:409.5px;width:1px;height:65.5px;background:#e2e2e2;"></div><div class="r" style="left:430.8px;top:409.5px;width:1px;height:65.5px;background:#e2e2e2;"></div><div class="r" style="left:608.8px;top:409.5px;width:1px;height:65.5px;background:#e2e2e2;"></div><div class="r" style="left:763.8px;top:409.5px;width:1px;height:65.5px;background:#e2e2e2;"></div><div class="r" style="left:962.5px;top:409.5px;width:1px;height:65.5px;background:#e2e2e2;"></div><div class="r" style="left:1096px;top:409.5px;width:1px;height:65.5px;background:#e2e2e2;"></div><div class="r" style="left:0px;top:474px;width:1227px;height:1px;background:#f4f4f4;"></div><div class="t" style="left:767.5px;top:-10.59px;font-size:17px;color:#141414;font-weight:normal;transform:scaleX(0.9773);transform-origin:left top;">Petro Marine Life Center</div><div class="t" style="left:767.5px;top:14.71px;font-size:17px;color:#141414;font-weight:normal;transform:scaleX(1.0458);transform-origin:left top;">for future outplanting)</div><div class="t" style="left:3px;top:44.11px;font-size:17px;color:#141414;font-weight:bold;transform:scaleX(0.9556);transform-origin:left top;">HAZWOPER / oil spill response</div><div class="t" style="left:3px;top:69.11px;font-size:17px;color:#141414;font-weight:bold;transform:scaleX(0.9612);transform-origin:left top;">trainings</div><div class="t" style="left:297.8px;top:44.91px;font-size:17px;color:#141414;font-weight:normal;transform:scaleX(0.9940);transform-origin:left top;">Nancy Stephanz</div><div class="t" style="left:435px;top:44.91px;font-size:17px;color:#141414;font-weight:normal;transform:scaleX(0.9836);transform-origin:left top;">Ed Bowlby</div><div class="t" style="left:767.5px;top:43.91px;font-size:17px;color:#141414;font-weight:normal;transform:scaleX(1.0248);transform-origin:left top;">Contractor to give</div><div class="t" style="left:767.5px;top:69.41px;font-size:17px;color:#141414;font-weight:normal;transform:scaleX(1.0582);transform-origin:left top;">training</div><div class="t" style="left:3px;top:95.31px;font-size:17px;color:#141414;font-weight:bold;transform:scaleX(0.9237);transform-origin:left top;">Forage Fish</div><div class="t" style="left:297.8px;top:96.11px;font-size:17px;color:#141414;font-weight:normal;transform:scaleX(0.9819);transform-origin:left top;">Alan Clark</div><div class="t" style="left:435px;top:96.11px;font-size:17px;color:#141414;font-weight:normal;transform:scaleX(1.0001);transform-origin:left top;">Chelsea Korbulic / Ed</div><div class="t" style="left:435px;top:120.91px;font-size:17px;color:#141414;font-weight:normal;transform:scaleX(1.0288);transform-origin:left top;">Bowlby (tentative)</div><div class="t" style="left:767.5px;top:96.11px;font-size:17px;color:#141414;font-weight:normal;transform:scaleX(0.9636);transform-origin:left top;">WDFW, NWSC</div><div class="t" style="left:3px;top:147.11px;font-size:17px;color:#141414;font-weight:bold;transform:scaleX(0.9585);transform-origin:left top;">Kelp Monitoring</div><div class="t" style="left:297.8px;top:147.91px;font-size:17px;color:#141414;font-weight:normal;transform:scaleX(0.9819);transform-origin:left top;">Alan Clark</div><div class="t" style="left:435px;top:147.91px;font-size:17px;color:#141414;font-weight:normal;transform:scaleX(1.0116);transform-origin:left top;">Chelsea Korbulic</div><div class="t" style="left:767.5px;top:147.91px;font-size:17px;color:#141414;font-weight:normal;transform:scaleX(0.9434);transform-origin:left top;">NWSC</div><div class="t" style="left:3px;top:200.01px;font-size:17px;color:#141414;font-weight:bold;transform:scaleX(0.9522);transform-origin:left top;">Education &amp; Outreach</div><div class="t" style="left:297.8px;top:200.81px;font-size:17px;color:#141414;font-weight:normal;transform:scaleX(0.9940);transform-origin:left top;">Nancy Stephanz</div><div class="t" style="left:3px;top:251.21px;font-size:17px;color:#141414;font-weight:bold;transform:scaleX(0.9547);transform-origin:left top;">Advisory Work (possible</div><div class="t" style="left:3px;top:277.21px;font-size:17px;color:#141414;font-weight:bold;transform:scaleX(1.0090);transform-origin:left top;">subcommittee)</div><div class="t" style="left:297.8px;top:252.01px;font-size:17px;color:#141414;font-weight:normal;transform:scaleX(0.9687);transform-origin:left top;">Ann Soule</div><div class="t" style="left:3px;top:329.31px;font-size:17px;color:#141414;font-weight:bold;transform:scaleX(0.9563);transform-origin:left top;">Travel &amp; Training</div><div class="t" style="left:3px;top:362.51px;font-size:17px;color:#141414;font-weight:bold;transform:scaleX(1.0226);transform-origin:left top;">(County admin unrelated to</div><div class="t" style="left:3px;top:388.11px;font-size:17px;color:#141414;font-weight:bold;transform:scaleX(0.9764);transform-origin:left top;">specific activities)</div><div class="t" style="left:970px;top:44.09px;font-size:17.5px;color:#111;font-weight:normal;">$</div><div class="t" style="right:137.20000000000005px;top:44.09px;font-size:17.5px;color:#111;font-weight:normal;transform:scaleX(1.054);transform-origin:right top;">7,000.00</div><div class="t" style="left:1105.7px;top:44.09px;font-size:17.5px;color:#111;font-weight:normal;">$</div><div class="t" style="right:-31px;top:44.09px;font-size:17.5px;color:#111;font-weight:normal;transform:scaleX(1.054);transform-origin:right top;">14,000.00</div><div class="t" style="left:970px;top:96.29px;font-size:17.5px;color:#111;font-weight:normal;">$</div><div class="t" style="right:137.20000000000005px;top:96.29px;font-size:17.5px;color:#111;font-weight:normal;transform:scaleX(1.054);transform-origin:right top;">500.00</div><div class="t" style="left:1105.7px;top:96.29px;font-size:17.5px;color:#111;font-weight:normal;">$</div><div class="t" style="right:-31px;top:96.29px;font-size:17.5px;color:#111;font-weight:normal;transform:scaleX(1.054);transform-origin:right top;">1,000.00</div><div class="t" style="left:970px;top:148.09px;font-size:17.5px;color:#111;font-weight:normal;">$</div><div class="t" style="right:137.20000000000005px;top:148.09px;font-size:17.5px;color:#111;font-weight:normal;transform:scaleX(1.054);transform-origin:right top;">2,500.00</div><div class="t" style="left:1105.7px;top:148.09px;font-size:17.5px;color:#111;font-weight:normal;">$</div><div class="t" style="right:-31px;top:148.09px;font-size:17.5px;color:#111;font-weight:normal;transform:scaleX(1.054);transform-origin:right top;">2,500.00</div><div class="t" style="left:970px;top:200.99px;font-size:17.5px;color:#111;font-weight:normal;">$</div><div class="t" style="right:137.20000000000005px;top:200.99px;font-size:17.5px;color:#111;font-weight:normal;transform:scaleX(1.054);transform-origin:right top;">2,000.00</div><div class="t" style="left:1105.7px;top:200.99px;font-size:17.5px;color:#111;font-weight:normal;">$</div><div class="t" style="right:-31px;top:200.99px;font-size:17.5px;color:#111;font-weight:normal;transform:scaleX(1.054);transform-origin:right top;">4,000.00</div><svg class="r" style="left:1085px;top:91px;" width="11" height="10" viewBox="0 0 11 10"><path d="M0 0H10.5V9.5z" fill="#b45ccc"/></svg><svg class="r" style="left:1085px;top:143px;" width="11" height="10" viewBox="0 0 11 10"><path d="M0 0H10.5V9.5z" fill="#b45ccc"/></svg><svg class="r" style="left:1085px;top:196px;" width="11" height="10" viewBox="0 0 11 10"><path d="M0 0H10.5V9.5z" fill="#b45ccc"/></svg><div class="t" style="left:1204px;top:363.59px;font-size:17.5px;color:#111;font-weight:normal;transform:scaleX(1.054);transform-origin:left top;">$2,000.00</div><div class="r" style="left:963px;top:408.5px;width:264px;height:2px;background:#111;"></div><div class="t" style="left:1044px;top:417.19px;font-size:17.5px;color:#111;font-weight:normal;transform:scaleX(1.2444);transform-origin:left top;">Total</div><div class="t" style="left:1106px;top:416.69px;font-size:17.5px;color:#111;font-weight:normal;">$</div><div class="t" style="right:-30px;top:417.19px;font-size:17.5px;color:#111;font-weight:normal;transform:scaleX(1.054);transform-origin:right top;">152,000.00</div></div><div class="r" style="left:0px;top:225px;width:35px;height:39px;background:#0e0e0e;"></div><div class="r" style="left:0px;top:263.5px;width:35px;height:1px;background:#333;"></div><div class="r" style="left:0px;top:264px;width:35px;height:51px;background:#0e0e0e;"></div><div class="r" style="left:0px;top:314.5px;width:35px;height:1px;background:#333;"></div><div class="r" style="left:0px;top:315px;width:35px;height:52px;background:#0e0e0e;"></div><div class="r" style="left:0px;top:366.5px;width:35px;height:1px;background:#333;"></div><div class="r" style="left:0px;top:367px;width:35px;height:53px;background:#0e0e0e;"></div><div class="r" style="left:0px;top:419.5px;width:35px;height:1px;background:#333;"></div><div class="r" style="left:0px;top:420px;width:35px;height:51.5px;background:#0e0e0e;"></div><div class="r" style="left:0px;top:471.0px;width:35px;height:1px;background:#333;"></div><div class="r" style="left:0px;top:471.5px;width:35px;height:78.5px;background:#0e0e0e;"></div><div class="r" style="left:0px;top:549.5px;width:35px;height:1px;background:#333;"></div><div class="r" style="left:0px;top:550px;width:35px;height:33px;background:#0e0e0e;"></div><div class="r" style="left:0px;top:582.5px;width:35px;height:1px;background:#333;"></div><div class="r" style="left:0px;top:583px;width:35px;height:51.5px;background:#0e0e0e;"></div><div class="r" style="left:0px;top:634.0px;width:35px;height:1px;background:#333;"></div><div class="r" style="left:0px;top:634.5px;width:35px;height:20.5px;background:#0e0e0e;"></div><div class="r" style="left:0px;top:654.5px;width:35px;height:1px;background:#333;"></div><div class="t" style="left:18px;top:242.89px;font-size:17.5px;color:#d8d8d8;font-weight:normal;transform:translateX(-50%);">8</div><div class="t" style="left:18px;top:293.89px;font-size:17.5px;color:#d8d8d8;font-weight:normal;transform:translateX(-50%);">9</div><div class="t" style="left:18px;top:345.89px;font-size:17.5px;color:#d8d8d8;font-weight:normal;transform:translateX(-50%);">10</div><div class="t" style="left:18px;top:398.89px;font-size:17.5px;color:#d8d8d8;font-weight:normal;transform:translateX(-50%);">11</div><div class="t" style="left:18px;top:450.39px;font-size:17.5px;color:#d8d8d8;font-weight:normal;transform:translateX(-50%);">12</div><div class="t" style="left:18px;top:528.89px;font-size:17.5px;color:#d8d8d8;font-weight:normal;transform:translateX(-50%);">13</div><div class="t" style="left:18px;top:561.89px;font-size:17.5px;color:#d8d8d8;font-weight:normal;transform:translateX(-50%);">14</div><div class="t" style="left:18px;top:613.39px;font-size:17.5px;color:#d8d8d8;font-weight:normal;transform:translateX(-50%);">15</div><div class="r" style="left:1263px;top:199px;width:17px;height:456px;background:#141414;"></div><svg class="r" style="left:1267px;top:202px;" width="9" height="7" viewBox="0 0 9 7"><path d="M0.5 6.5L4.5 0.5L8.5 6.5z" fill="#9a9a9a"/></svg><div class="r" style="left:1268px;top:361px;width:7px;height:107px;background:#8a8a8a;border-radius:3.5px;"></div><svg class="r" style="left:1267px;top:645px;" width="9" height="7" viewBox="0 0 9 7"><path d="M0.5 0.5L4.5 6.5L8.5 0.5z" fill="#9a9a9a"/></svg><div class="r" style="left:0px;top:655px;width:1280px;height:27px;background:#0f0f0f;"></div><div class="r" style="left:0px;top:681.5px;width:1280px;height:1px;background:#262626;"></div><svg class="r" style="left:20px;top:664px;" width="7" height="9" viewBox="0 0 7 9"><path d="M6 0.5L1 4.5L6 8.5" fill="none" stroke="#5a5a5a" stroke-width="1.2"/></svg><svg class="r" style="left:48px;top:664px;" width="7" height="9" viewBox="0 0 7 9"><path d="M1 0.5L6 4.5L1 8.5" fill="none" stroke="#5a5a5a" stroke-width="1.2"/></svg><div class="t" style="left:103px;top:663.38px;font-size:12.9px;color:#d8d8d8;font-weight:normal;transform:scaleX(0.8653);transform-origin:left top;">NWSC NOFO Proposals + Existing</div><div class="r" style="left:290px;top:661px;width:1px;height:15px;background:#3a3a3a;"></div><div class="t" style="left:302.5px;top:663.38px;font-size:12.9px;color:#d8d8d8;font-weight:normal;transform:scaleX(0.8613);transform-origin:left top;">Cut NWSC NOFO Proposals</div><div class="r" style="left:459.5px;top:660px;width:120px;height:19.5px;background:#ffffff;border-radius:0 0 3px 3px;"></div><div class="t" style="left:466.5px;top:660.83px;font-size:12.6px;color:#1a1a1a;font-weight:normal;transform:scaleX(0.9172);transform-origin:left top;">Print version 4.21.25</div><div class="r" style="left:466px;top:674.5px;width:107px;height:1.5px;background:#3f8f6a;"></div><div class="r" style="left:583px;top:661px;width:1px;height:15px;background:#3a3a3a;"></div><svg class="r" style="left:618.5px;top:663px;" width="11" height="10" viewBox="0 0 11 10"><path d="M5.5 0V10M0.5 5H10.5" stroke="#d0d0d0" stroke-width="1.2"/></svg><div class="r" style="left:770px;top:665px;width:2px;height:2px;background:#bbb;border-radius:1px;"></div><div class="r" style="left:770px;top:668.5px;width:2px;height:2px;background:#bbb;border-radius:1px;"></div><div class="r" style="left:770px;top:672px;width:2px;height:2px;background:#bbb;border-radius:1px;"></div><svg class="r" style="left:787.5px;top:665px;" width="6" height="8" viewBox="0 0 6 8"><path d="M6 0L0 4L6 8z" fill="#8a8a8a"/></svg><div class="r" style="left:797.5px;top:664.5px;width:244px;height:8px;background:#9a9a9a;border-radius:4px;"></div><svg class="r" style="left:1253px;top:664px;" width="6" height="9" viewBox="0 0 6 9"><path d="M0 0L6 4.5L0 9z" fill="#8a8a8a"/></svg><div class="r" style="left:0px;top:682.5px;width:1280px;height:17.5px;background:#131313;"></div><div class="t" style="left:10px;top:687.38px;font-size:9px;color:#cfcfcf;font-weight:normal;transform:scaleX(0.9033);transform-origin:left top;">Ready</div><svg class="r" style="left:50px;top:686px;" width="12" height="11" viewBox="0 0 12 11"><rect x="0.5" y="0.5" width="11" height="10" fill="none" stroke="#cfcfcf" stroke-width="1"/><path d="M0.5 3H11.5M3 3V10.5" stroke="#cfcfcf" stroke-width="0.9"/><circle cx="8" cy="7" r="2.2" fill="none" stroke="#cfcfcf" stroke-width="1"/></svg><svg class="r" style="left:76.5px;top:685px;" width="13" height="13" viewBox="0 0 13 13"><circle cx="5" cy="2" r="1.4" fill="none" stroke="#cfcfcf" stroke-width="1"/><path d="M1 4.5H9M5 4.5V9M5 9L2.5 12.5M6.5 10.5L8 12L12 7" fill="none" stroke="#cfcfcf" stroke-width="1"/></svg><div class="t" style="left:91px;top:687.38px;font-size:9px;color:#cfcfcf;font-weight:normal;transform:scaleX(0.9843);transform-origin:left top;">Accessibility: Good to go</div><svg class="r" style="left:941px;top:685px;" width="13" height="13" viewBox="0 0 13 13"><rect x="0.5" y="0.5" width="11" height="8" fill="none" stroke="#cfcfcf" stroke-width="1"/><path d="M4 11.5H8" stroke="#cfcfcf" stroke-width="1"/><circle cx="9.5" cy="9.5" r="2.3" fill="#131313" stroke="#cfcfcf" stroke-width="1"/></svg><div class="t" style="left:954px;top:687.68px;font-size:9px;color:#cfcfcf;font-weight:normal;transform:scaleX(0.9530);transform-origin:left top;">Display Settings</div><div class="r" style="left:1032px;top:683px;width:32px;height:17px;background:#262626;"></div><svg class="r" style="left:1042.5px;top:686px;" width="12" height="12" viewBox="0 0 12 12"><rect x="0.5" y="0.5" width="11" height="11" fill="none" stroke="#d8d8d8" stroke-width="1"/><path d="M4.2 0.5V11.5M7.8 0.5V11.5M0.5 4.2H11.5M0.5 7.8H11.5" stroke="#d8d8d8" stroke-width="1"/></svg><svg class="r" style="left:1076px;top:686px;" width="12" height="12" viewBox="0 0 12 12"><rect x="0.5" y="0.5" width="11" height="11" fill="none" stroke="#cfcfcf" stroke-width="1"/><rect x="3" y="2.5" width="6" height="7" fill="none" stroke="#cfcfcf" stroke-width="0.9"/></svg><svg class="r" style="left:1109px;top:686px;" width="12" height="12" viewBox="0 0 12 12"><path d="M0.5 11.5V0.5H11.5V11.5M0.5 7H7V0.5" fill="none" stroke="#cfcfcf" stroke-width="1.1"/></svg><div class="r" style="left:1139px;top:690.5px;width:4px;height:1px;background:#7a7a7a;"></div><div class="r" style="left:1146px;top:690.5px;width:84px;height:1px;background:#8a8a8a;"></div><div class="r" style="left:1195px;top:687px;width:4px;height:8px;background:#bdbdbd;"></div><svg class="r" style="left:1235px;top:687px;" width="7" height="7" viewBox="0 0 7 7"><path d="M3.5 0V7M0 3.5H7" stroke="#9a9a9a" stroke-width="1"/></svg><div class="t" style="left:1252px;top:687.38px;font-size:9px;color:#cfcfcf;font-weight:normal;transform:scaleX(0.8906);transform-origin:left top;">160%</div><svg class="r" style="left:1066px;top:0px;" width="214" height="120" viewBox="0 0 214 120">
<defs><linearGradient id="ceil" x1="0" y1="0" x2="0" y2="1"><stop offset="0" stop-color="#b8b8b4"/><stop offset="1" stop-color="#d0d0ca"/></linearGradient>
<linearGradient id="carpet" x1="0" y1="0" x2="0" y2="1"><stop offset="0" stop-color="#9c9c96"/><stop offset="1" stop-color="#b2b2aa"/></linearGradient></defs>
<rect x="0" y="0" width="214" height="120" fill="#1a1a1a"/>
<rect x="0" y="0" width="214" height="16" fill="url(#ceil)"/>
<rect x="1.4" y="0.8" width="29" height="5" fill="#f6f6f6" rx="1"/>
<rect x="93" y="0" width="27" height="5.9" fill="#f8f8f8" rx="1"/>
<rect x="181" y="0.8" width="33" height="5" fill="#f6f6f6" rx="1"/>
<rect x="9" y="9.3" width="19.5" height="3.2" fill="#eeeeec"/><rect x="54" y="9.3" width="16" height="3" fill="#eeeeec"/><rect x="99.7" y="9.3" width="15.3" height="3.3" fill="#eeeeec"/><rect x="142" y="9.7" width="16" height="2.6" fill="#eeeeec"/><rect x="182.7" y="9.3" width="23.8" height="3" fill="#eeeeec"/>
<rect x="98" y="12.5" width="18" height="2.8" fill="#e4e4e0"/>
<rect x="0" y="15" width="214" height="35" fill="#d6d6ce"/>
<rect x="0" y="16" width="17.5" height="21.3" fill="#3a4a9a"/><rect x="1" y="18" width="15.5" height="17.5" fill="#c8d2ee"/>
<rect x="0" y="37.3" width="22.6" height="23.7" fill="#6f9a88"/>
<rect x="22.6" y="15" width="6.8" height="35.8" fill="#e8e8e2"/>
<rect x="29.4" y="20.3" width="14.4" height="30.5" fill="#4a4038"/>
<rect x="41" y="26" width="5" height="17" fill="#c86868"/><rect x="41" y="28" width="5" height="2" fill="#eee"/><rect x="41" y="33" width="5" height="2" fill="#eee"/>
<rect x="54" y="16" width="105" height="20.4" fill="#5b7c74"/>
<rect x="98" y="17" width="17" height="11" fill="#c8ccd0"/>
<circle cx="105.6" cy="22.9" r="4.6" fill="#2a3a5a" stroke="#e0e0e0" stroke-width="1"/>
<g fill="#262a2c"><rect x="56" y="29" width="10" height="7.4" rx="1.5"/><rect x="70" y="29" width="10" height="7.4" rx="1.5"/><rect x="84" y="29" width="10" height="7.4" rx="1.5"/><rect x="98" y="29" width="10" height="7.4" rx="1.5"/><rect x="112" y="29" width="10" height="7.4" rx="1.5"/><rect x="126" y="29" width="10" height="7.4" rx="1.5"/><rect x="140" y="29" width="10" height="7.4" rx="1.5"/><rect x="151" y="29" width="6" height="7.4" rx="1.5"/></g>
<rect x="160" y="15" width="7.5" height="32.5" fill="#e2e2dc"/>
<rect x="171" y="21" width="16" height="20.5" fill="#3a3632"/><rect x="177" y="25" width="4" height="4" fill="#ddd"/>
<rect x="189.5" y="12" width="24.5" height="25" fill="#dcdcd4"/>
<rect x="189.5" y="37" width="24.5" height="22" fill="#88a898"/>
<rect x="45.5" y="35.6" width="113.5" height="13.4" fill="#a8834f"/>
<rect x="0" y="49" width="214" height="56" fill="url(#carpet)"/>
<rect x="0" y="50" width="22" height="11" fill="#6f9a88"/>
<rect x="189.5" y="49" width="24.5" height="10" fill="#88a898"/>
<path d="M77.7 44.9L82.7 47.5L74.3 69.5H48.8L50.5 64.4z" fill="#5e5248"/>
<path d="M60 50L78 48L74 52L58 54z" fill="#d8d8d0"/>
<rect x="81" y="43.2" width="45.8" height="7.6" fill="#4e443c"/>
<path d="M121.7 46.6H128.5L152 67L150.5 69.5H130.2z" fill="#5e5248"/>
<path d="M130 54L142 54L146 58L134 58z" fill="#d8d8d0"/>
<rect x="59" y="69.5" width="11.9" height="18.5" fill="#3e3834"/>
<rect x="132" y="69.5" width="15" height="18.5" fill="#3e3834"/>
<rect x="26" y="49" width="13.5" height="29" fill="#1e1e1e" rx="3"/>
<path d="M30 78L24 84M35 78L40 84" stroke="#333" stroke-width="1.5"/>
<rect x="41" y="40.7" width="18" height="39" fill="#2c2c30" rx="4"/>
<rect x="48.8" y="45.8" width="10.2" height="10.2" fill="#c8c8c8"/>
<circle cx="53" cy="43" r="2.8" fill="#b8a898"/>
<rect x="62.4" y="39" width="6.6" height="10" fill="#d0c8c0" rx="2"/>
<rect x="79.4" y="36.4" width="6.6" height="9.4" fill="#8898b8" rx="2"/>
<rect x="120" y="36.4" width="10" height="11" fill="#e088c0" rx="2"/>
<circle cx="125" cy="36" r="2.4" fill="#e8c8b8"/>
<rect x="143.8" y="42.4" width="14" height="22" fill="#3a3a40" rx="3"/>
<circle cx="150" cy="43" r="3" fill="#d8d0c8"/>
<rect x="151" y="55" width="16" height="29.7" fill="#3a3a40" rx="3"/>
<rect x="170" y="42.4" width="18" height="25.4" fill="#a8804a"/>
<circle cx="183" cy="38" r="3" fill="#d8d8d8"/>
<rect x="188.7" y="45.8" width="10.1" height="17.8" fill="#2a2a2e" rx="2"/>
<path d="M37.8 94V86Q46 79 55.6 86V94z" fill="#333"/>
<rect x="0" y="105" width="214" height="15" fill="#1c1c1c"/>
<path d="M145 105L142.5 120M172 105L169.5 120M200.5 105L198 120" stroke="#a0a0a0" stroke-width="2"/>
</svg><div class="r" style="left:1066px;top:106px;width:123.5px;height:14px;background:rgba(20,20,20,0.85);"></div><div class="t" style="left:1071px;top:106.62px;font-size:12.5px;color:#f0f0f0;font-weight:bold;transform:scaleX(0.7706);transform-origin:left top;">BOCC Conference Room</div><div class="r" style="left:342px;top:616px;width:596px;height:40px;background:#58585c;"></div><div class="t" style="left:347.5px;top:617.92px;font-size:19px;color:#f4f4f4;font-weight:bold;transform:scaleX(0.8379);transform-origin:left top;">motion to extend our meeting for maybe about 10 minutes so we could finish</div><div class="t" style="left:347.5px;top:639.12px;font-size:19px;color:#f4f4f4;font-weight:bold;transform:scaleX(0.8250);transform-origin:left top;">having a conversation about the last item, which is a shoreline</div><svg class="r" style="left:1093px;top:646px;" width="140" height="36" viewBox="0 0 140 36"><g fill="none" stroke="#ffffff" stroke-width="5.6" stroke-linejoin="round" opacity="0.53"><path d="M3.5 5.8H26L4 31.2H28.5"/><circle cx="44.5" cy="18.5" r="12.7"/><circle cx="77" cy="18.5" r="12.7"/><path d="M98.8 34V15.35A9.55 9.55 0 0 1 117.9 15.35V34M117.9 15.35A8.3 8.3 0 0 1 134.5 15.35V34"/></g></svg><svg class="r" style="left:892px;top:523px;" width="9" height="14" viewBox="0 0 9 14"><path d="M0.5 0.5V12L3.5 9L6 13.5L7.5 12.8L5.2 8.5H9z" fill="#fff" stroke="#222" stroke-width="0.9"/></svg>
</body></html>
